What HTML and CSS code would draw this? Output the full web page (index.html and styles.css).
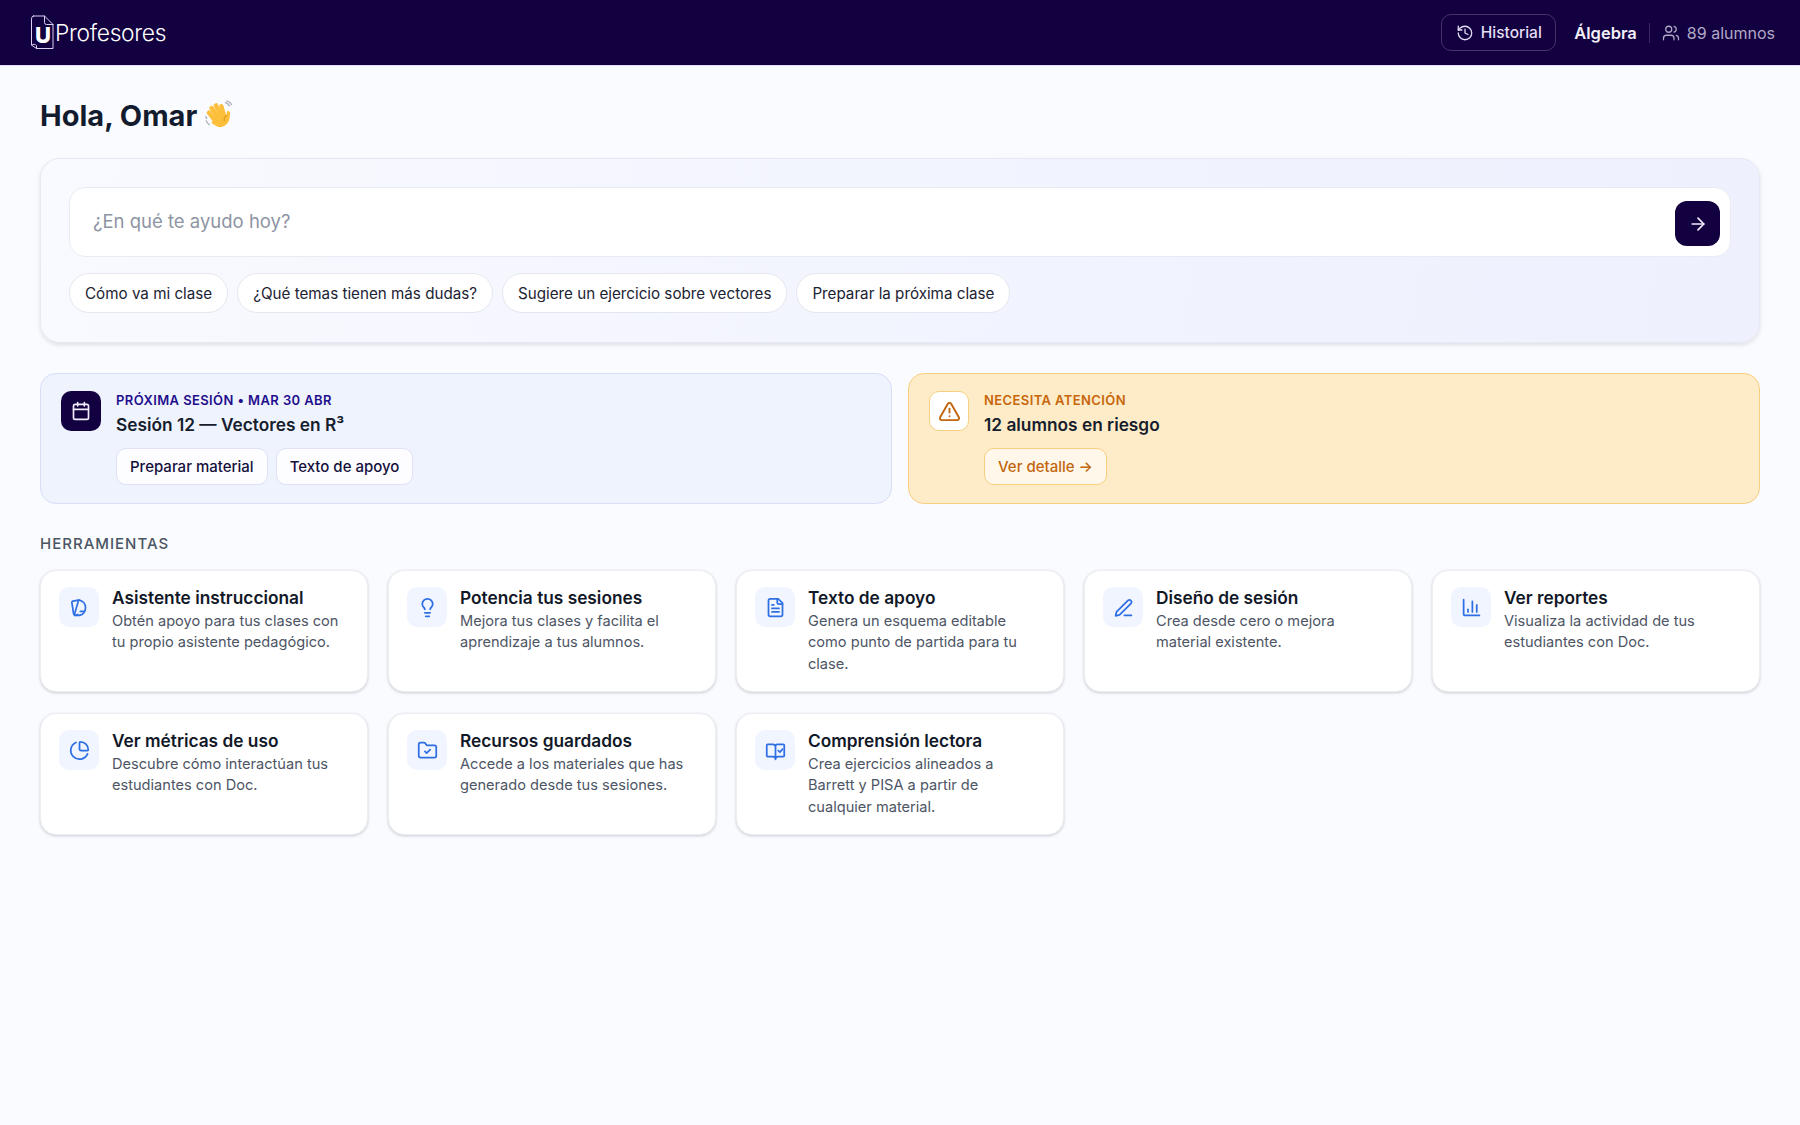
FILE: index.html
```html
<!DOCTYPE html>
<html lang="es">
<head>
    <meta charset="UTF-8">
    <title>Profesores</title>
    <link rel="stylesheet" href="styles.css">
</head>
<body>
    <header class="topbar">
        <div class="brand">
            <svg class="brand-logo" viewBox="0 0 24 35">
                <path d="M3.500 1h11L23 9.500V33.500H6.500L1.500 30V3.500A2.500 2.500 0 0 1 3.500 1z"/>
                <path d="M14.500 1v6.500A2 2 0 0 0 16.500 9.500H23"/>
                <path d="M1.500 30c1.500-1.200 4-1 5 .5v3"/>
                <text x="13" y="28" text-anchor="middle">U</text>
            </svg>
            <span class="brand-name">Profesores</span>
        </div>
        <div class="topbar-right">
            <button class="history-btn">
                <svg class="icon-18" viewBox="0 0 24 24"><path d="M3 12a9 9 0 1 0 9-9 9.750 9.750 0 0 0-6.740 2.740L3 8"/><path d="M3 3v5h5"/><path d="M12 7v5l4 2"/></svg>
                Historial
            </button>
            <span class="course">Álgebra</span>
            <span class="divider"></span>
            <span class="students">
                <svg class="icon-18" viewBox="0 0 24 24"><path d="M16 21v-2a4 4 0 0 0-4-4H6a4 4 0 0 0-4 4v2"/><circle cx="9" cy="7" r="4"/><path d="M22 21v-2a4 4 0 0 0-3-3.870"/><path d="M16 3.130a4 4 0 0 1 0 7.750"/></svg>
                89 alumnos
            </span>
        </div>
    </header>

    <main class="page">
        <h1 class="greeting">Hola, Omar
            <svg class="wave" viewBox="0 0 28 28">
                <g class="wave-lines">
                    <path d="M19 2.500c1.600.4 3 1.500 3.700 3"/><path d="M20.500 1c1.700.3 3.400 1.600 4.300 3.300"/>
                    <path d="M1.200 19.500c.5 1.500 1.500 2.700 2.900 3.400"/><path d="M.8 15.500l.7 1.800"/>
                </g>
                <g class="wave-hand">
                    <rect x="4" y="9" width="4.200" height="13" rx="2.100" transform="rotate(-38 6 15)"/>
                    <rect x="7" y="4.500" width="4.200" height="14" rx="2.100" transform="rotate(-34 9 12)"/>
                    <rect x="10.500" y="2.500" width="4.200" height="15" rx="2.100" transform="rotate(-26 12.500 10)"/>
                    <rect x="14.500" y="3.500" width="4" height="13" rx="2" transform="rotate(-16 16.500 10)"/>
                    <path d="M20.500 10.500c1.600-.8 3 .2 2.900 2-.1 3-.4 6.500-2.400 9.300-2.500 3.500-7.500 4.700-11 2.300L6 21.500 12 10l8 4z"/>
                </g>
                <path class="wave-crease" d="M20.500 14.500c-2 1-3 3-2.500 5"/>
            </svg>
        </h1>

        <section class="ask-panel">
            <div class="ask-box">
                <span class="ask-placeholder">¿En qué te ayudo hoy?</span>
                <button class="ask-send">
                    <svg class="icon-20" viewBox="0 0 24 24"><path d="M5 12h14"/><path d="m12 5 7 7-7 7"/></svg>
                </button>
            </div>
            <div class="chips">
                <button class="chip">Cómo va mi clase</button>
                <button class="chip">¿Qué temas tienen más dudas?</button>
                <button class="chip">Sugiere un ejercicio sobre vectores</button>
                <button class="chip">Preparar la próxima clase</button>
            </div>
        </section>

        <section class="highlights">
            <div class="highlight session">
                <div class="highlight-icon">
                    <svg class="icon-20" viewBox="0 0 24 24"><path d="M8 2v4"/><path d="M16 2v4"/><rect x="3" y="4" width="18" height="18" rx="2"/><path d="M3 10h18"/></svg>
                </div>
                <div class="highlight-body">
                    <div class="eyebrow">PRÓXIMA SESIÓN • MAR 30 ABR</div>
                    <div class="highlight-title">Sesión 12 — Vectores en R³</div>
                    <div class="highlight-actions">
                        <button class="action">Preparar material</button>
                        <button class="action">Texto de apoyo</button>
                    </div>
                </div>
            </div>
            <div class="highlight alert">
                <div class="highlight-icon">
                    <svg class="icon-22" viewBox="0 0 24 24"><path d="m21.730 18-8-14a2 2 0 0 0-3.480 0l-8 14A2 2 0 0 0 4 21h16a2 2 0 0 0 1.730-3"/><path d="M12 9v4"/><path d="M12 17h.01"/></svg>
                </div>
                <div class="highlight-body">
                    <div class="eyebrow">NECESITA ATENCIÓN</div>
                    <div class="highlight-title">12 alumnos en riesgo</div>
                    <div class="highlight-actions">
                        <button class="action">Ver detalle →</button>
                    </div>
                </div>
            </div>
        </section>

        <h2 class="section-label">HERRAMIENTAS</h2>
        <section class="tools">
            <div class="tool">
                <div class="tool-icon"><svg viewBox="0 0 24 24"><path d="M11 3.500h1a9 9 0 0 1 0 17.500H7"/><path d="M11 3.500 4.500 4.800a1.500 1.500 0 0 0-1.200 1.800l2 12.700A2 2 0 0 0 7 21l3-1"/><path d="M11 3.500 6.500 19"/><path d="M13 16.500h4"/></svg></div>
                <div><h3>Asistente instruccional</h3><p>Obtén apoyo para tus clases con tu propio asistente pedagógico.</p></div>
            </div>
            <div class="tool">
                <div class="tool-icon"><svg viewBox="0 0 24 24"><path d="M15 14c.2-1 .7-1.700 1.500-2.500 1-.9 1.500-2.200 1.500-3.500A6 6 0 0 0 6 8c0 1 .2 2.200 1.500 3.500.7.700 1.300 1.500 1.500 2.500"/><path d="M9 18h6"/><path d="M10 22h4"/></svg></div>
                <div><h3>Potencia tus sesiones</h3><p>Mejora tus clases y facilita el aprendizaje a tus alumnos.</p></div>
            </div>
            <div class="tool">
                <div class="tool-icon"><svg viewBox="0 0 24 24"><path d="M15 2H6a2 2 0 0 0-2 2v16a2 2 0 0 0 2 2h12a2 2 0 0 0 2-2V7z"/><path d="M14 2v4a2 2 0 0 0 2 2h4"/><path d="M10 9H8"/><path d="M16 13H8"/><path d="M16 17H8"/></svg></div>
                <div><h3>Texto de apoyo</h3><p>Genera un esquema editable como punto de partida para tu clase.</p></div>
            </div>
            <div class="tool">
                <div class="tool-icon"><svg viewBox="0 0 24 24"><path d="M13 21h8"/><path d="M17.200 3.800a2.500 2.500 0 0 1 3.500 3.500L7.500 20.500 3 21.500l1-4.500z"/></svg></div>
                <div><h3>Diseño de sesión</h3><p>Crea desde cero o mejora material existente.</p></div>
            </div>
            <div class="tool">
                <div class="tool-icon"><svg viewBox="0 0 24 24"><path d="M3 3v16a2 2 0 0 0 2 2h16"/><path d="M8 17v-3"/><path d="M13 17V5"/><path d="M18 17V9"/></svg></div>
                <div><h3>Ver reportes</h3><p>Visualiza la actividad de tus estudiantes con Doc.</p></div>
            </div>
            <div class="tool">
                <div class="tool-icon"><svg viewBox="0 0 24 24"><path d="M21 12c.6 0 1-.4 1-1a9 9 0 0 0-9-9c-.6 0-1 .4-1 1v7a2 2 0 0 0 2 2z"/><path d="M21.200 15.900A10 10 0 1 1 8 2.800"/></svg></div>
                <div><h3>Ver métricas de uso</h3><p>Descubre cómo interactúan tus estudiantes con Doc.</p></div>
            </div>
            <div class="tool">
                <div class="tool-icon"><svg viewBox="0 0 24 24"><path d="M20 20a2 2 0 0 0 2-2V8a2 2 0 0 0-2-2h-7.900a2 2 0 0 1-1.700-.9l-.8-1.200A2 2 0 0 0 7.900 3H4a2 2 0 0 0-2 2v13a2 2 0 0 0 2 2z"/><path d="m9 13 2 2 4-4"/></svg></div>
                <div><h3>Recursos guardados</h3><p>Accede a los materiales que has generado desde tus sesiones.</p></div>
            </div>
            <div class="tool">
                <div class="tool-icon"><svg viewBox="0 0 24 24"><path d="M12 21V7a2 2 0 0 1 2-2h7a1 1 0 0 1 1 1v12a1 1 0 0 1-1 1h-6a3 3 0 0 0-3 3 3 3 0 0 0-3-3H3a1 1 0 0 1-1-1V6a1 1 0 0 1 1-1h6a3 3 0 0 1 3 3"/><path d="m15 12 2 2 3-3.500"/></svg></div>
                <div><h3>Comprensión lectora</h3><p>Crea ejercicios alineados a Barrett y PISA a partir de cualquier material.</p></div>
            </div>
        </section>
    </main>
</body>
</html>
```

FILE: styles.css
```css
* {
    box-sizing: border-box;
}

body {
    margin: 0;
    min-height: 100vh;
    background: #fafbfe;
    color: #111827;
    font-family: Inter, "Noto Sans", sans-serif;
}

button {
    font-family: inherit;
    cursor: pointer;
}

svg {
    fill: none;
    stroke: currentColor;
    stroke-width: 2;
    stroke-linecap: round;
    stroke-linejoin: round;
}

.icon-18 {
    width: 18px;
    height: 18px;
    stroke-width: 1.7;
}

.icon-20 {
    width: 20px;
    height: 20px;
}

.icon-22 {
    width: 23px;
    height: 23px;
}

/* top bar */
.topbar {
    height: 66px;
    padding: 0 25px 0 30px;
    display: flex;
    align-items: center;
    justify-content: space-between;
    background: #130041;
    border-bottom: 1px solid #e4dcf8;
}

.brand {
    display: flex;
    align-items: center;
    gap: 2px;
}

.brand-logo {
    width: 24px;
    height: 35px;
    stroke: #d9d0f2;
    stroke-width: 1;
}

.brand-logo text {
    fill: #fff;
    stroke: none;
    font-family: Inter, sans-serif;
    font-size: 22px;
    font-weight: 800;
}

.brand-name {
    margin-left: -1px;
    color: #fff;
    font-size: 22.800px;
    font-weight: 300;
    letter-spacing: -0.3px;
}

.topbar-right {
    display: flex;
    align-items: center;
}

.history-btn {
    width: 115px;
    height: 37px;
    margin-right: 18px;
    display: flex;
    align-items: center;
    justify-content: center;
    gap: 7px;
    background: none;
    color: #e3def3;
    border: 1px solid #443469;
    border-radius: 10px;
    font-size: 15.500px;
    font-weight: 500;
}

.course {
    color: #f2eff9;
    font-size: 16.500px;
    font-weight: 600;
}

.divider {
    width: 1px;
    height: 20px;
    margin: 0 12px;
    background: #3b2a63;
}

.students {
    display: flex;
    align-items: center;
    gap: 7px;
    color: #b0a9c6;
    font-size: 16px;
}

/* main */
.page {
    padding: 29px 40px;
}

.greeting {
    margin: 0 0 23px;
    height: 40px;
    display: flex;
    align-items: center;
    gap: 8px;
    font-size: 29px;
    font-weight: 700;
    color: #131b2e;
}

.wave {
    width: 30px;
    height: 30px;
    stroke-width: 0;
}

.wave-lines {
    stroke: #a9afb8;
    stroke-width: 1.300;
}

.wave-hand {
    fill: #fbbf3c;
    stroke: none;
}

.wave-crease {
    stroke: #e09b1e;
    stroke-width: 1;
}

.ask-panel {
    height: 185px;
    padding: 28px 28px;
    background: linear-gradient(100deg, #f9faff 0%, #f1f3fe 60%, #eef0fd 100%);
    border: 1px solid #e6e8f3;
    border-radius: 20px;
    box-shadow: 0 2px 4px rgba(30, 30, 60, 0.12);
}

.ask-box {
    height: 70px;
    padding: 0 10px 0 23px;
    display: flex;
    align-items: center;
    justify-content: space-between;
    background: #fff;
    border: 1px solid #e9ebf4;
    border-radius: 16px;
}

.ask-placeholder {
    margin-top: -2px;
    color: #8d94a3;
    font-size: 18.500px;
}

.ask-send {
    width: 45px;
    height: 45px;
    margin-top: 3px;
    display: flex;
    align-items: center;
    justify-content: center;
    background: #130041;
    color: #f1edfa;
    border: none;
    border-radius: 12px;
    padding: 0;
}

.chips {
    margin-top: 16px;
    display: flex;
    gap: 9px;
}

.chip {
    height: 40px;
    padding: 0 15px;
    background: #fff;
    color: #1c2333;
    border: 1px solid #e5e7f0;
    border-radius: 20px;
    font-size: 15.200px;
}

/* next session + alert */
.highlights {
    margin-top: 30px;
    display: grid;
    grid-template-columns: 1fr 1fr;
    gap: 16px;
}

.highlight {
    height: 131px;
    padding: 17px 20px;
    display: flex;
    gap: 15px;
    border: 1px solid;
    border-radius: 16px;
}

.highlight-icon {
    flex: none;
    width: 40px;
    height: 40px;
    display: flex;
    align-items: center;
    justify-content: center;
    border-radius: 10px;
}

.eyebrow {
    font-size: 13px;
    font-weight: 600;
    line-height: 18px;
    letter-spacing: 0.4px;
}

.highlight-title {
    margin-top: 4px;
    font-size: 17.300px;
    font-weight: 600;
    line-height: 24px;
    color: #161d2d;
}

.highlight-actions {
    margin-top: 11px;
    display: flex;
    gap: 8px;
}

.action {
    height: 37px;
    padding: 0 13px;
    border: 1px solid;
    border-radius: 10px;
    font-size: 15px;
    font-weight: 500;
}

.session {
    background: #eff3fe;
    border-color: #d9ddf8;
}

.session .highlight-icon {
    background: #130041;
    color: #f1edfa;
}

.session .eyebrow {
    color: #1f0f8c;
}

.session .action {
    background: #fdfdff;
    color: #15103c;
    border-color: #dfe2f6;
}

.alert {
    background: #feecc8;
    border-color: #f8cf80;
}

.alert .highlight-icon {
    background: #fff;
    color: #c2660f;
    border: 1px solid #f8cf80;
}

.alert .eyebrow {
    color: #c7660b;
}

.alert .action {
    background: #fff8ea;
    color: #c2660f;
    border-color: #f8cf80;
}

/* tools */
.section-label {
    margin: 30px 0 16px;
    font-size: 15px;
    font-weight: 500;
    line-height: 20px;
    letter-spacing: 1px;
    color: #4b5563;
}

.tools {
    display: grid;
    grid-template-columns: repeat(5, 1fr);
    grid-auto-rows: 122px;
    gap: 21px 20px;
}

.tool {
    padding: 16px 24px 16px 18px;
    display: flex;
    gap: 13px;
    background: #fff;
    border: 1px solid #eceef2;
    border-radius: 16px;
    box-shadow: 0 1px 3px rgba(20, 25, 45, 0.2);
}

.tool-icon {
    flex: none;
    width: 40px;
    height: 40px;
    display: flex;
    align-items: center;
    justify-content: center;
    background: #f0f5ff;
    color: #2f6fe4;
    border-radius: 10px;
}

.tool-icon svg {
    width: 21px;
    height: 21px;
}

.tool h3 {
    margin: 0;
    font-size: 17.300px;
    font-weight: 600;
    line-height: 22px;
    color: #111827;
}

.tool p {
    margin: 2px 0 0;
    font-size: 14.600px;
    line-height: 21.300px;
    color: #4d5565;
}
```
